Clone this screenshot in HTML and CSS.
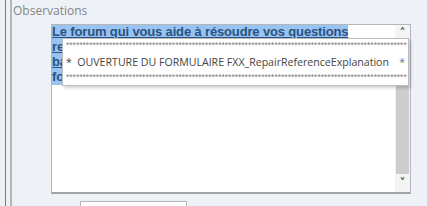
FILE: index.html
```html
<!DOCTYPE html>
<html lang="fr">
<head>
    <meta charset="UTF-8">
    <title>Observations</title>
    <link rel="stylesheet" href="styles.css">
</head>
<body>
    <div class="frame">
        <div class="panel">
            <div class="label">Observations</div>

            <div class="memo-wrap">
                <div class="memo">
                    <div class="memo-text">
                        <div class="row"><span class="sel">Le forum qui vous aide à résoudre vos questions</span></div>
                        <div class="row"><span class="sel">relatives à Access, aux tables et aux requêtes</span></div>
                        <div class="row"><span class="sel">bases de données, états, macros et modules</span></div>
                        <div class="row last"><span class="sel">formulaires et contrôles</span></div>
                    </div>
                    <div class="scrollbar">
                        <div class="arrow">&#x2C4;</div>
                        <div class="track"><div class="thumb"></div></div>
                        <div class="arrow">&#x2C5;</div>
                    </div>
                </div>

                <!-- tooltip over the memo -->
                <div class="tip">
                    <div class="stars">*******************************************************************************************************</div>
                    <div class="tip-line">
                        <span>*&nbsp; OUVERTURE DU FORMULAIRE FXX_RepairReferenceExplanation</span>
                        <span class="end">*</span>
                    </div>
                    <div class="stars">*******************************************************************************************************</div>
                </div>
            </div>

            <div class="field"></div>
        </div>
    </div>
</body>
</html>
```

FILE: styles.css
```css
* {
    margin: 0;
    padding: 0;
    box-sizing: border-box;
}

body {
    background-color: #eef1f6;
    font-family: "Open Sans", "Liberation Sans", sans-serif;
    overflow: hidden;
}

.frame {
    margin-left: 5px;
    border-left: 1px solid #c9585a;
    padding-left: 4px;
    height: 206px;
}

.panel {
    border-left: 2px solid #b4b6ba;
    height: 206px;
    padding-left: 1px;
}

.label {
    font-size: 12px;
    color: #858585;
    line-height: 16px;
    padding-top: 3px;
    height: 24px;
}

.memo-wrap {
    position: relative;
    margin-left: 38px;
    width: 360px;
}

.memo {
    display: flex;
    height: 170px;
    background: #fff;
    border: 1px solid #b3b6bb;
    border-bottom: 2px solid #a3a3a3;
}

.memo-text {
    flex: 1;
    height: 60px;
    font-family: "Liberation Sans", Arial, sans-serif;
    font-size: 13px;
    font-weight: bold;
    letter-spacing: -0.15px;
    line-height: 15px;
    color: #2c5283;
    white-space: nowrap;
    overflow: hidden;
}

.row {
    height: 15px;
    overflow: hidden;
}

.sel {
    display: inline-block;
    height: 15px;
    line-height: 14px;
    vertical-align: top;
    background: #99c4f2;
    text-decoration: underline;
}

.row.last .sel {
    text-decoration: none;
}

.scrollbar {
    width: 15px;
    display: flex;
    flex-direction: column;
    background: #f4f4f4;
}

.arrow {
    height: 17px;
    font-size: 12px;
    line-height: 17px;
    text-align: center;
    color: #505050;
    font-family: "DejaVu Sans", sans-serif;
    font-weight: bold;
}

.track {
    flex: 1;
    padding: 14px 1px 1px 1px;
}

.thumb {
    height: 100%;
    background: #cdcdcd;
}

.tip {
    position: absolute;
    left: 11px;
    top: 14px;
    width: 347px;
    height: 48px;
    background: #fff;
    border: 1px solid #bdbdbd;
    box-shadow: 2px 2px 3px rgba(0, 0, 0, 0.18);
    padding: 2px 2px 0 3px;
    color: #555;
}

.stars {
    font-family: "Liberation Sans", Arial, sans-serif;
    font-size: 8.5px;
    line-height: 9px;
    color: #7c7c7c;
    white-space: nowrap;
}

.tip-line {
    display: flex;
    justify-content: space-between;
    font-size: 10.6px;
    line-height: 22px;
    padding-top: 1px;
    white-space: nowrap;
    color: #444;
}

.tip-line .end {
    padding-right: 1px;
    color: #777;
}

.field {
    margin: 7px 0 0 67px;
    width: 107px;
    height: 10px;
    background: #fff;
    border: 1px solid #b3b6bb;
}
```
